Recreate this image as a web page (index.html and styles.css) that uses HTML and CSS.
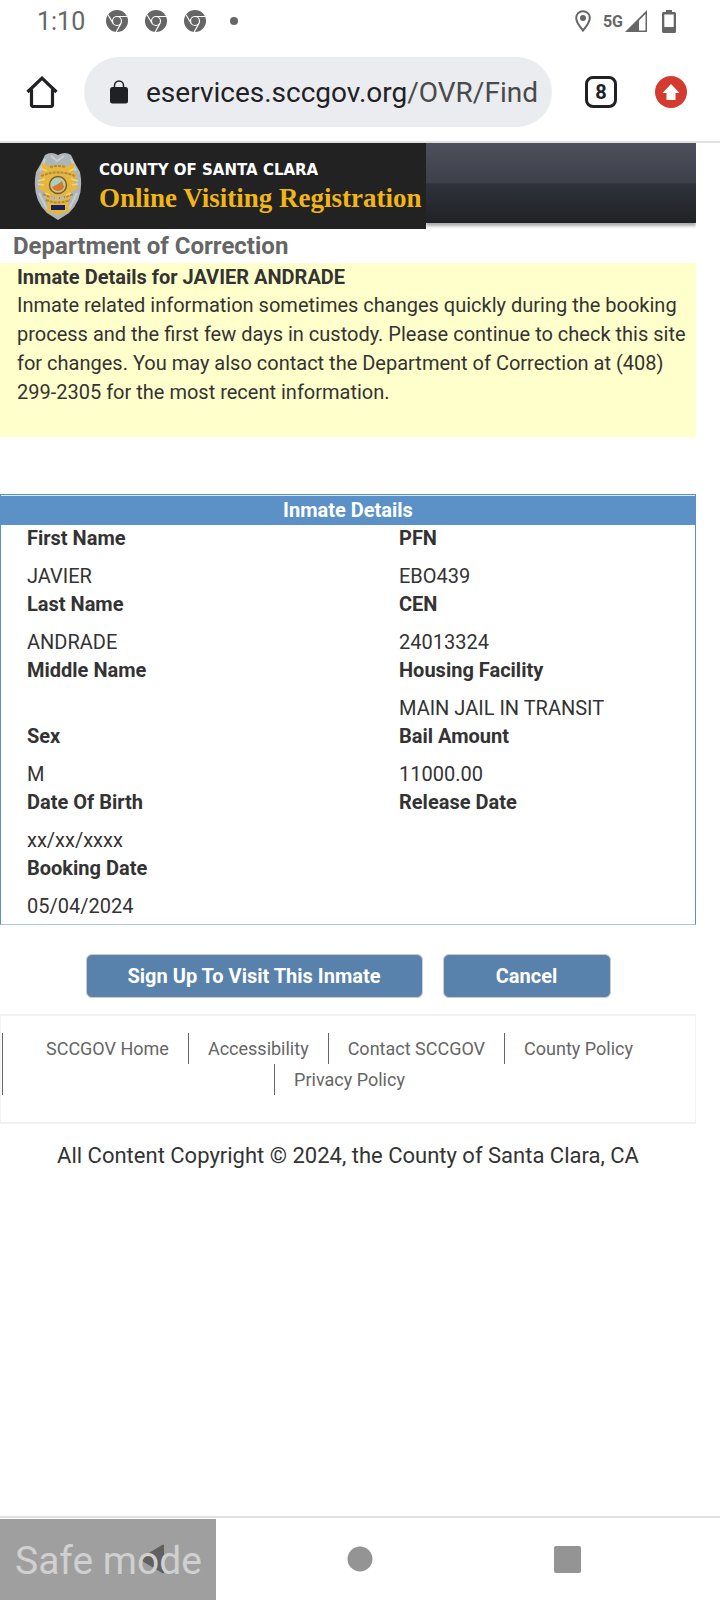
FILE: index.html
```html
<!DOCTYPE html>
<html lang="en">
<head>
<meta charset="utf-8">
<meta name="viewport" content="width=device-width, initial-scale=1">
<title>Online Visiting Registration</title>
<link rel="stylesheet" href="styles.css">
</head>
<body>
<svg width="0" height="0" class="defs" aria-hidden="true">
  <symbol id="chrome" viewBox="0 0 22 22">
    <circle cx="11" cy="11" r="11" fill="#666"/>
    <circle cx="11" cy="11" r="4.500" fill="none" stroke="#fff" stroke-width="1.200"/>
    <path d="M11 6.500H21M7 13.200 2 4.800M15 13.200 10.200 22" stroke="#fff" stroke-width="1.200" fill="none"/>
  </symbol>
</svg>

<div class="status-bar">
  <span class="clock">1:10</span>
  <svg class="notice"><use href="#chrome"/></svg>
  <svg class="notice"><use href="#chrome"/></svg>
  <svg class="notice"><use href="#chrome"/></svg>
  <span class="dot"></span>
  <div class="signals">
    <svg width="16" height="22" viewBox="0 0 16 22"><path d="M8 1.2A6.7 6.7 0 0 0 1.2 8C1.2 12.500 8 20.500 8 20.500S14.800 12.500 14.800 8A6.700 6.700 0 0 0 8 1.200Z" fill="none" stroke="#666" stroke-width="2"/><circle cx="8" cy="8" r="3" fill="#666"/></svg>
    <span class="network">5G</span>
    <svg width="22" height="22" viewBox="0 0 22 22"><path d="M0 22 22 0V22Z" fill="#666"/><path d="M14 10.500 20.500 4V20.500H14Z" fill="#fff"/></svg>
    <svg class="battery" width="14" height="23" viewBox="0 0 14 23"><path d="M4 0h6v2h2.500a1.500 1.500 0 0 1 1.500 1.500v18a1.500 1.500 0 0 1-1.500 1.500h-11A1.500 1.500 0 0 1 0 21.500v-18A1.500 1.500 0 0 1 1.500 2H4Z" fill="#666"/><path d="M2.300 4.500h9.400V17H2.300Z" fill="#fff"/></svg>
  </div>
</div>

<div class="toolbar">
  <button class="icon-button" aria-label="Home"><svg width="32" height="32" viewBox="0 0 32 32"><path d="M1.500 16 16 2.200 30.500 16M5.500 13.500V28.500a2 2 0 0 0 2 2h17a2 2 0 0 0 2-2V13.500" fill="none" stroke="#202124" stroke-width="3.200"/></svg></button>
  <div class="address">
    <svg width="18" height="24" viewBox="0 0 18 24"><rect y="7" width="18" height="16.500" rx="2.500" fill="#202124"/><path d="M4.500 8V5.500a4.500 4.500 0 0 1 9 0V8" fill="none" stroke="#202124" stroke-width="1.500"/></svg>
    <span class="url">eservices.sccgov.org<span class="path">/OVR/Find</span></span>
  </div>
  <button class="tabs" aria-label="Open tabs, 8">8</button>
  <button class="icon-button" aria-label="Update"><svg width="32" height="32" viewBox="0 0 32 32"><circle cx="16" cy="16" r="16" fill="#d33b30"/><path d="M16 8 24.500 17H20.500V24H11.500V17H7.500Z" fill="#fff"/></svg></button>
</div>

<main class="page">
  <header class="banner">
    <div class="brand">
      <svg class="badge" width="50" height="70" viewBox="0 0 50 70">
        <path d="M12 4Q18 0 25 4Q32 0 38 4Q42 13 47 21Q52 47 36 62L25 69 14 62Q-2 47 3 21Q8 13 12 4Z" fill="#aeb5b8"/>
        <path d="M12 8 7 20M38 8 43 20M6 42 14 58M44 42 36 58M18 5 24 10 31 5" fill="none" stroke="#c8ced0" stroke-width="2"/>
        <path d="M8 12 17 15Q25 13 33 15L42 12 40 21 44 24 41 31 45 38 36 42Q39 47 35 52L37 60 25 64 13 60 15 52Q11 47 14 42L5 38 9 31 6 24 10 21Z" fill="#e5b640"/>
        <path d="M17 16Q25 14 33 16M8 25Q25 18 42 25M10 43Q25 51 40 43M13 49Q25 54 37 49" stroke="#b08a3a" stroke-width="2" stroke-dasharray="3 1" fill="none"/>
        <path d="M5 30 12 28M5 33 11 34M45 30 38 28M45 33 39 34M12 42 17 44M38 42 33 44M9 18 14 20M41 18 36 20" stroke="#f6d472" stroke-width="1.500"/>
        <circle cx="25" cy="34" r="8.500" fill="#d9c27a" stroke="#735f37" stroke-width="1.500"/>
        <circle cx="25" cy="34" r="6.500" fill="#9fd1cf"/>
        <path d="M19 36 25 33 29 30 31 36Q29 40 25 40 21 40 19 36Z" fill="#dc7624"/>
        <path d="M17 47H33" stroke="#b9b9c0" stroke-width="3" stroke-dasharray="4 1"/>
        <rect x="18" y="54" width="14" height="5" fill="#17205c"/>
      </svg>
      <div class="titles">
        <span class="county">COUNTY OF SANTA CLARA</span>
        <span class="service">Online Visiting Registration</span>
      </div>
    </div>
    <div class="banner-fill"></div>
  </header>

  <h1 class="department">Department of Correction</h1>
  <section class="notice-box">
    <h2>Inmate Details for JAVIER ANDRADE</h2>
    <p>Inmate related information sometimes changes quickly during the booking process and the first few days in custody. Please continue to check this site for changes. You may also contact the Department of Correction at (408) 299-2305 for the most recent information.</p>
  </section>

  <section class="details">
    <h2>Inmate Details</h2>
    <dl>
      <div><dt>First Name</dt><dd>JAVIER</dd></div>
      <div><dt>PFN</dt><dd>EBO439</dd></div>
      <div><dt>Last Name</dt><dd>ANDRADE</dd></div>
      <div><dt>CEN</dt><dd>24013324</dd></div>
      <div><dt>Middle Name</dt><dd></dd></div>
      <div><dt>Housing Facility</dt><dd>MAIN JAIL IN TRANSIT</dd></div>
      <div><dt>Sex</dt><dd>M</dd></div>
      <div><dt>Bail Amount</dt><dd>11000.00</dd></div>
      <div><dt>Date Of Birth</dt><dd>xx/xx/xxxx</dd></div>
      <div><dt>Release Date</dt><dd></dd></div>
      <div><dt>Booking Date</dt><dd>05/04/2024</dd></div>
    </dl>
  </section>

  <div class="actions">
    <button>Sign Up To Visit This Inmate</button>
    <button>Cancel</button>
  </div>

  <footer>
    <nav class="links">
      <ul>
        <li><a href="#">SCCGOV Home</a></li>
        <li><a href="#">Accessibility</a></li>
        <li><a href="#">Contact SCCGOV</a></li>
        <li><a href="#">County Policy</a></li>
        <li><a href="#">Privacy Policy</a></li>
      </ul>
    </nav>
    <p class="copyright">All Content Copyright © 2024, the County of Santa Clara, CA</p>
  </footer>
</main>

<div class="system-nav">
  <button aria-label="Back"><svg width="28" height="30" viewBox="0 0 28 30"><path d="M24 1.500V28.500L1.500 15Z" fill="#5a5a5a" stroke="#5a5a5a" stroke-width="2" stroke-linejoin="round"/></svg></button>
  <button aria-label="Home screen"><svg width="26" height="26" viewBox="0 0 26 26"><circle cx="13" cy="13" r="12.500" fill="#949494"/></svg></button>
  <button aria-label="Recent apps"><svg width="27" height="27" viewBox="0 0 27 27"><rect width="27" height="27" rx="2" fill="#949494"/></svg></button>
  <span class="safe-mode">Safe mode</span>
</div>
</body>
</html>
```
FILE: styles.css
```css
* { box-sizing: border-box; }
body {
  margin: 0;
  min-height: 100vh;
  display: flex;
  flex-direction: column;
  background: #fff;
  color: #333;
  font: 20px/29px Roboto, "Liberation Sans", sans-serif;
}
h1, h2, p, ul, dl, dd { margin: 0; padding: 0; }
button { font: inherit; border: 0; padding: 0; background: none; cursor: pointer; }
svg { display: block; flex: none; }
.defs { position: absolute; }

.status-bar {
  display: flex;
  align-items: center;
  height: 42px;
  padding: 0 44px 0 37px;
  gap: 17px;
  color: #666;
}
.clock { font-size: 25px; margin-right: 4px; }
.notice { width: 22px; height: 22px; }
.dot { width: 8px; height: 8px; margin-left: 7px; border-radius: 50%; background: #666; }
.signals { display: flex; align-items: center; margin-left: auto; }
.network { font-size: 16px; font-weight: 700; margin: 0 2px 0 12px; }
.battery { margin-left: 15px; }

.toolbar {
  display: flex;
  align-items: center;
  height: 101px;
  padding: 1px 33px 0 26px;
  border-bottom: 2px solid #e0e0e0;
}
.address {
  flex: 1;
  display: flex;
  align-items: center;
  gap: 18px;
  height: 70px;
  margin: 0 33px 0 26px;
  padding: 0 8px 0 26px;
  border-radius: 35px;
  background: #ebecf0;
  overflow: hidden;
}
.url { font-size: 28px; line-height: 36px; padding-top: 2px; color: #202124; white-space: nowrap; }
.path { color: #4a4a4a; }
.tabs {
  width: 32px;
  height: 32px;
  margin-right: 38px;
  border: 3px solid #202124;
  border-radius: 8px;
  color: #202124;
  font-size: 20px;
  font-weight: 700;
  line-height: 26px;
}

.page { flex: 1; margin-right: 24px; }
.banner { display: flex; align-items: flex-start; }
.brand {
  display: flex;
  align-items: center;
  gap: 16px;
  width: 426px;
  height: 86px;
  padding-left: 33px;
  background: #222;
}
.titles { display: flex; flex-direction: column; white-space: nowrap; }
.county { color: #fff; font: 700 15px/24px "DejaVu Sans", sans-serif; }
.service { color: #f0b517; font: 700 27px/32px "Liberation Serif", serif; }
.banner-fill {
  flex: 1;
  height: 80px;
  background: linear-gradient(#4d505c, #3d3f49 50%, #2f323b 51%, #212226);
  box-shadow: 0 3px 3px #aaa;
  clip-path: inset(0 0 -6px 0);
}
.department { padding: 3px 13px 2px; color: #666; font-size: 24px; line-height: 29px; }
.notice-box { padding: 0 0 30px 17px; background: #ffffcc; }
.notice-box h2 { font-size: 20px; line-height: 28px; }

.details { margin-top: 57px; border: 1px solid #5b91c7; border-bottom-color: #a9c6e3; }
.details h2 {
  border-top: 1px solid #dce8f4;
  background: #5b91c7;
  color: #fff;
  font-size: 20px;
  line-height: 29px;
  text-align: center;
}
.details dl { display: grid; grid-template-columns: 372fr 296fr; padding: 0 0 3px 26px; }
.details dt { font-weight: 700; line-height: 27px; }
.details dd { min-height: 39px; padding-top: 10px; }

.actions { display: flex; justify-content: center; gap: 20px; margin: 29px 0 16px; }
.actions button {
  height: 44px;
  padding: 0 41px;
  border: 1px solid #ccc;
  border-radius: 6px;
  background: #5881ab;
  color: #fff;
  font-weight: 700;
}
.actions button + button { min-width: 168px; }

.links { padding: 17px 0 27px 1px; border: 1px solid #f2f2f2; border-width: 2px 1px; }
.links ul {
  display: flex;
  flex-wrap: wrap;
  justify-content: center;
  padding: 0 20px;
  border-left: 1px solid #666;
  list-style: none;
  font-size: 18px;
  line-height: 31px;
}
.links li { padding: 0 19px; border-left: 1px solid #666; }
.links li:first-child { padding-left: 0; border-left: 0; }
.links a { color: #666; text-decoration: none; }
.copyright { padding: 16px 0; font-size: 22px; line-height: 32px; text-align: center; }

.system-nav {
  position: relative;
  display: grid;
  grid-template-columns: repeat(3, 207px);
  justify-content: center;
  align-items: center;
  height: 84px;
  border-top: 2px solid #e0e0e0;
}
.system-nav button { justify-self: center; }
.safe-mode {
  position: absolute;
  left: 0;
  bottom: 0;
  padding: 4px 14px 0 15px;
  background: rgba(100, 100, 100, .62);
  color: #d0d0d0;
  font-size: 39px;
  line-height: 77px;
}
```
